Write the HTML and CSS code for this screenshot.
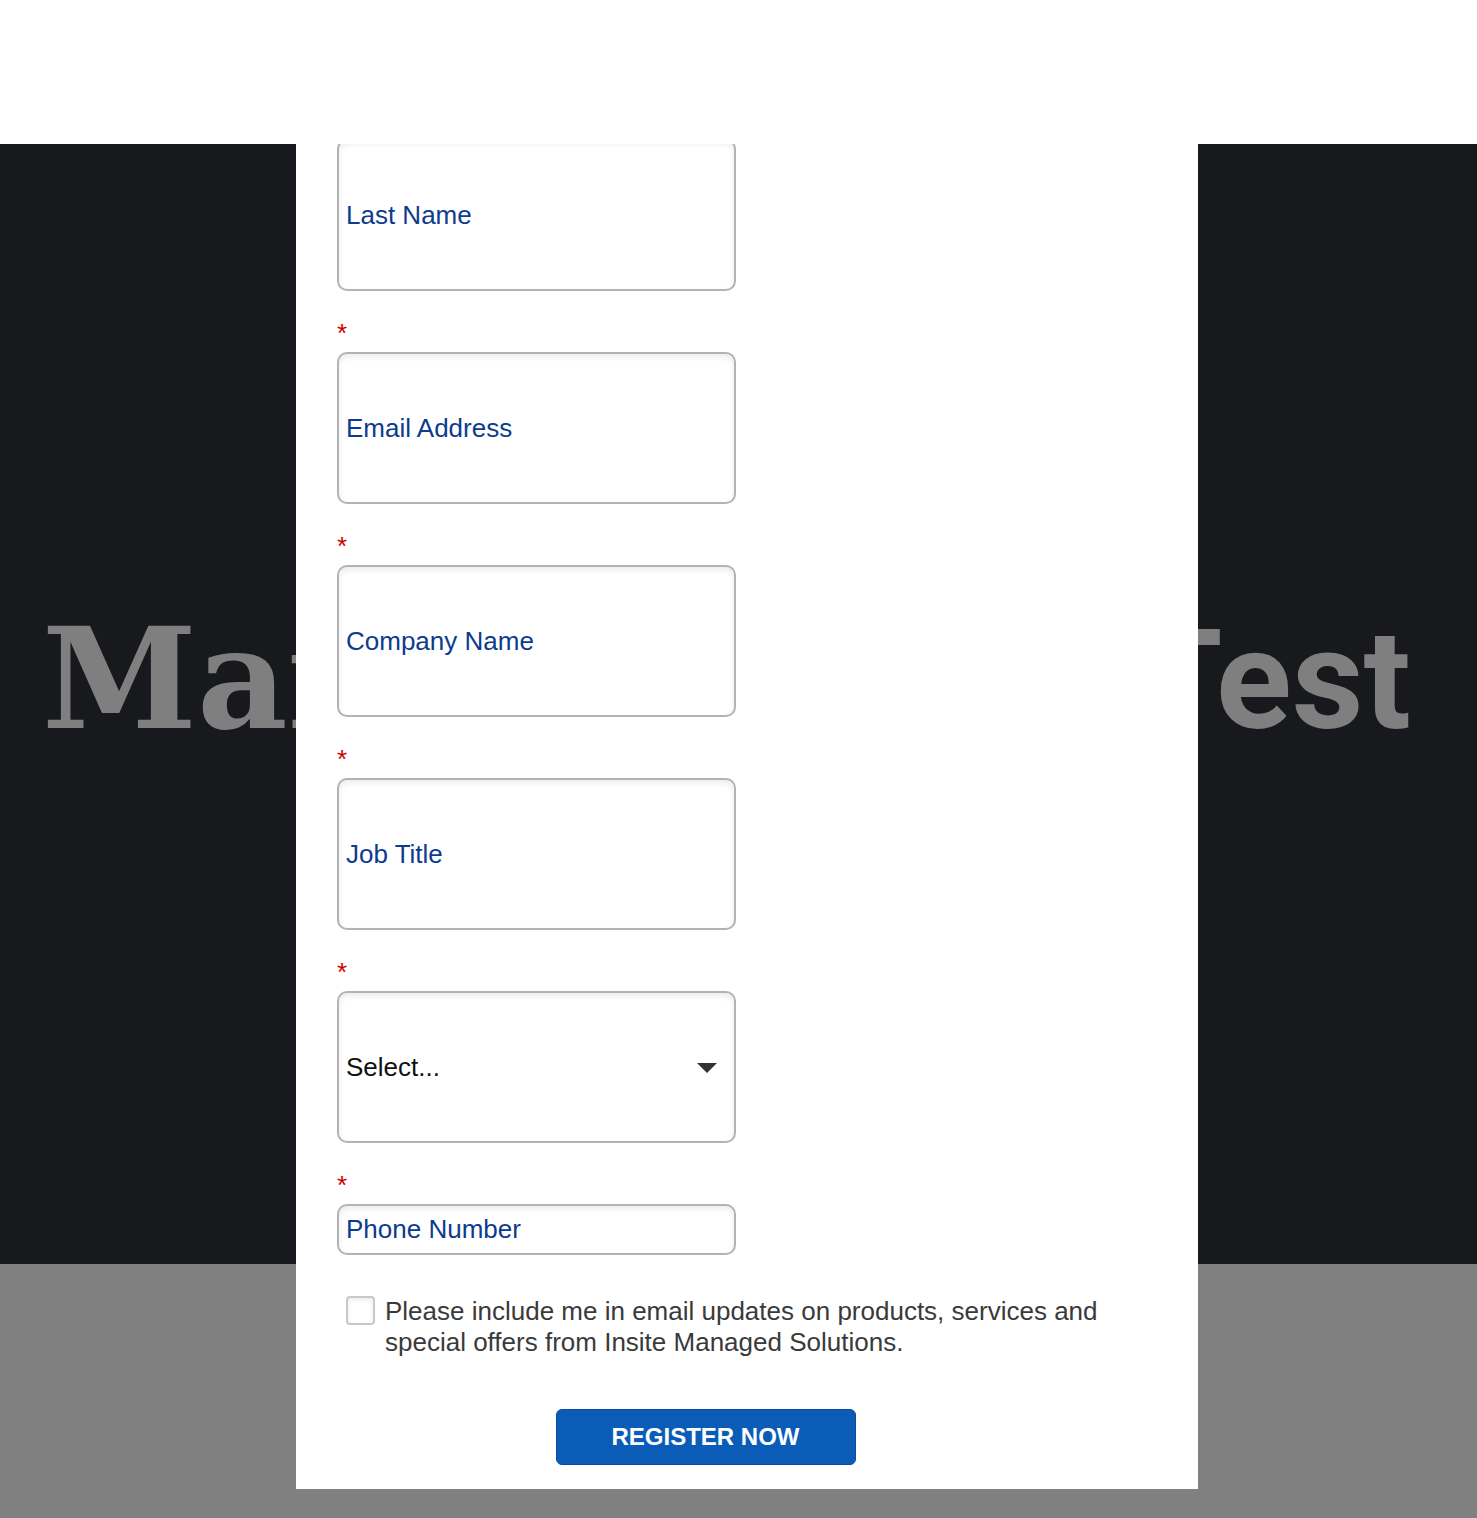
FILE: index.html
```html
<!DOCTYPE html>
<html lang="en">
<head>
    <meta charset="UTF-8">
    <meta name="viewport" content="width=device-width, initial-scale=1.0">
    <title>Register</title>
    <link rel="stylesheet" href="styles.css">
</head>
<body>

    <!-- Top bar -->
    <header class="topbar"></header>

    <!-- Hero -->
    <section class="hero">
        <h1 class="hero-title"><span class="left">Marketing</span><span class="right">Test</span></h1>
    </section>

    <section class="below"></section>

    <!-- Registration modal -->
    <div class="modal">
        <form class="reg-form">
            <input class="field" type="text" placeholder="Last Name">
            <span class="req">*</span>
            <input class="field" type="email" placeholder="Email Address">
            <span class="req">*</span>
            <input class="field" type="text" placeholder="Company Name">
            <span class="req">*</span>
            <input class="field" type="text" placeholder="Job Title">
            <span class="req">*</span>
            <div class="select-wrap">
                <select class="field select">
                    <option>Select...</option>
                </select>
                <svg class="caret" width="20" height="10" viewBox="0 0 20 10"><path d="M0 0h20L10 10z" fill="#333"/></svg>
            </div>
            <span class="req">*</span>
            <input class="field short" type="tel" placeholder="Phone Number">

            <label class="optin">
                <input type="checkbox">
                <span>Please include me in email updates on products, services and special offers from Insite Managed Solutions.</span>
            </label>

            <div class="actions">
                <button type="submit">REGISTER NOW</button>
            </div>
        </form>
    </div>

</body>
</html>
```

FILE: styles.css
```css
body {
    margin: 0;
    font-family: "Liberation Sans", Arial, sans-serif;
    background: #fff;
}
.topbar {
    height: 144px;
    background: #fff;
}
.hero {
    height: 1120px;
    box-sizing: border-box;
    padding: 465px 66px 0 42px;
    background: #18191d;
}
.hero-title {
    display: flex;
    justify-content: space-between;
    align-items: baseline;
    margin: 0;
    font-family: "DejaVu Serif", serif;
    font-weight: bold;
    font-size: 140px;
    line-height: 1;
    color: #7f7f7f;
}
.hero-title .right {
    font-family: Roboto, sans-serif;
    font-size: 140px;
}
.below {
    height: 254px;
    background: #808080;
}
.modal {
    position: absolute;
    top: 144px;
    left: 296px;
    width: 902px;
    box-sizing: border-box;
    padding: 0 0 24px 41px;
    overflow: hidden;
    background: #fff;
}
.reg-form {
    display: flex;
    flex-direction: column;
    align-items: flex-start;
    margin-top: -5px;
}
.field {
    width: 399px;
    height: 152px;
    box-sizing: border-box;
    padding: 0 7px;
    border: 2px solid #b3b3b6;
    border-radius: 10px;
    box-shadow: inset 0 3px 6px rgba(0, 0, 0, 0.08);
    font-family: inherit;
    font-size: 26px;
    color: #0d3b8e;
    background: #fff;
}
.field::placeholder {
    color: #0d3b8e;
    opacity: 1;
}
.field.short {
    height: 51px;
}
.req {
    display: block;
    height: 18px;
    margin: 33px 0 10px;
    font-size: 26px;
    line-height: 18px;
    color: #c00;
}
.select-wrap {
    position: relative;
}
.select {
    appearance: none;
    color: #111;
}
.caret {
    position: absolute;
    top: 72px;
    left: 360px;
}
.optin {
    display: flex;
    gap: 10px;
    width: 760px;
    margin: 41px 0 0 9px;
    font-size: 26px;
    line-height: 31px;
    color: #3a3a3a;
}
.optin input {
    appearance: none;
    flex: none;
    width: 29px;
    height: 29px;
    margin: 0;
    border: 2px solid #c8c8cb;
    border-radius: 4px;
    box-shadow: inset 0 2px 5px rgba(0, 0, 0, 0.08);
    background: #fff;
}
.actions {
    width: 737px;
    margin-top: 51px;
    text-align: center;
}
.actions button {
    width: 300px;
    height: 56px;
    border: 1px solid #0a4d9e;
    border-radius: 6px;
    background: #0b5cb7;
    color: #fff;
    font-family: inherit;
    font-weight: bold;
    font-size: 24px;
    cursor: pointer;
}
```
